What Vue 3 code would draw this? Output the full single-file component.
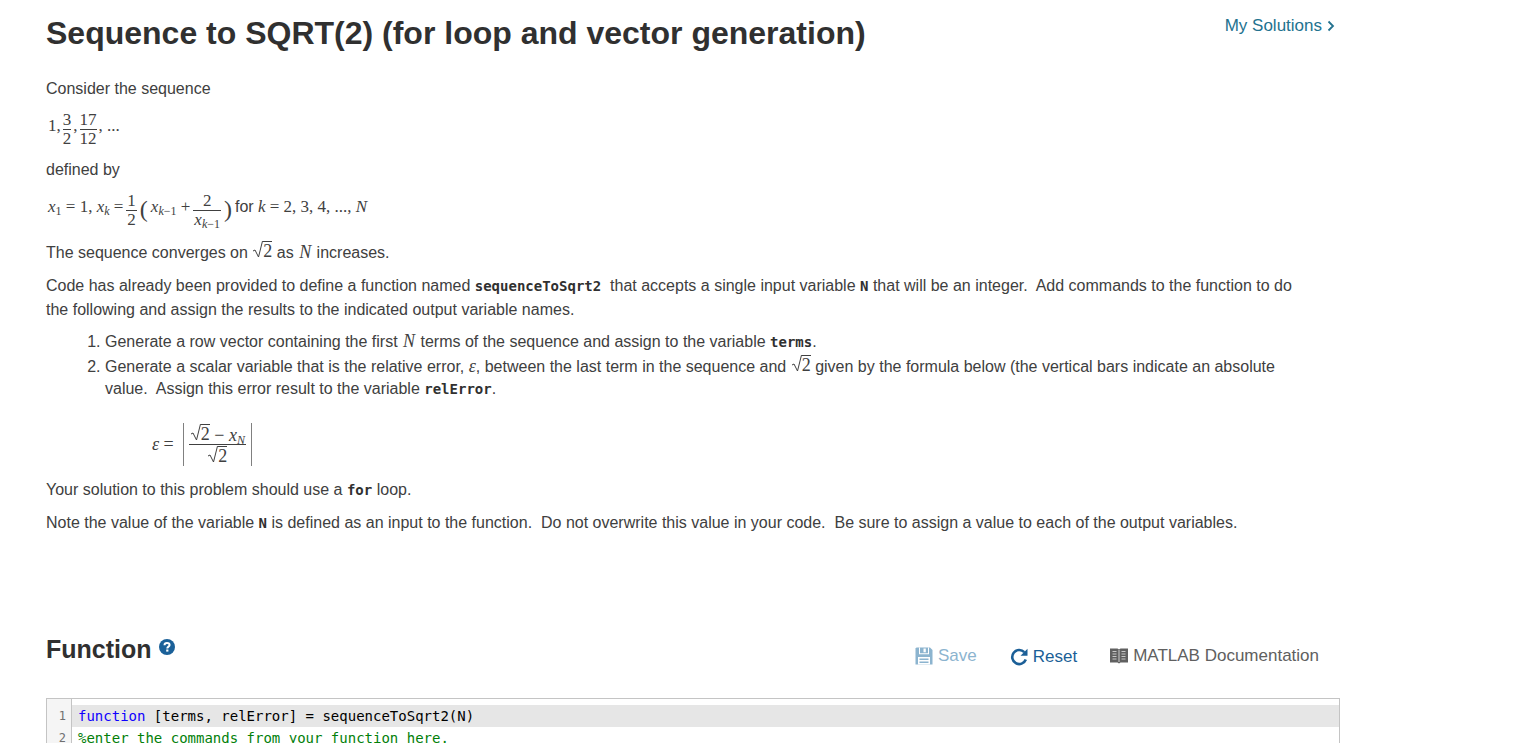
<template>
  <main class="page">
    <header class="page-header">
      <h1>{{ title }}</h1>
      <a class="solutions-link" href="#solutions">
        My Solutions
        <svg width="8" height="12" viewBox="0 0 8 12" aria-hidden="true">
          <path d="M1.500 1.500L6 6l-4.500 4.500" fill="none" stroke="currentColor" stroke-width="1.800" />
        </svg>
      </a>
    </header>

    <section class="description">
      <p>Consider the sequence</p>

      <div class="math-row sequence-row">
        <span class="term">1,</span>
        <span class="frac"><span>3</span><span>2</span></span>
        <span class="term">,</span>
        <span class="frac"><span>17</span><span>12</span></span>
        <span class="term">, ...</span>
      </div>

      <p>defined by</p>

      <div class="math-row recurrence-row">
        <span class="term"><i>x</i><sub>1</sub> = 1, <i>x</i><sub><i>k</i></sub> =</span>
        <span class="frac"><span>1</span><span>2</span></span>
        <span class="paren">(</span>
        <span class="term"><i>x</i><sub><i>k</i>−1</sub> +</span>
        <span class="frac"><span>2</span><span><i>x</i><sub><i>k</i>−1</sub></span></span>
        <span class="paren">)</span>
        <span class="term"><span class="word">for</span> <i>k</i> = 2, 3, 4, ..., <i>N</i></span>
      </div>

      <p>
        The sequence converges on
        <span class="math root"><svg class="radical" viewBox="0 0 11 18"><path d="M1 11l2-1 3.500 7L10.500 1" /></svg><span class="radicand">2</span></span>
        as <i class="math var">N</i> increases.
      </p>

      <p>
        Code has already been provided to define a function named
        <code>sequenceToSqrt2</code>&nbsp; that accepts a single input variable <code>N</code>
        that will be an integer.&nbsp; Add commands to the function to do the following and assign
        the results to the indicated output variable names.
      </p>

      <ol>
        <li>
          Generate a row vector containing the first <i class="math var">N</i> terms of the sequence
          and assign to the variable <code>terms</code>.
        </li>
        <li>
          Generate a scalar variable that is the relative error, <i class="math">ε</i>, between the
          last term in the sequence and
          <span class="math root"><svg class="radical" viewBox="0 0 11 18"><path d="M1 11l2-1 3.500 7L10.500 1" /></svg><span class="radicand">2</span></span>
          given by the formula below (the vertical bars indicate an absolute value.&nbsp; Assign this
          error result to the variable <code>relError</code>.
        </li>
      </ol>

      <div class="math-row error-row">
        <span><i>ε</i> =</span>
        <span class="abs">
          <span class="frac">
            <span><span class="root"><svg class="radical" viewBox="0 0 11 18"><path d="M1 11l2-1 3.500 7L10.500 1" /></svg><span class="radicand">2</span></span> − <i>x</i><sub><i>N</i></sub></span>
            <span><span class="root"><svg class="radical" viewBox="0 0 11 18"><path d="M1 11l2-1 3.500 7L10.500 1" /></svg><span class="radicand">2</span></span></span>
          </span>
        </span>
      </div>

      <p>Your solution to this problem should use a <code>for</code> loop.</p>
      <p>
        Note the value of the variable <code>N</code> is defined as an input to the function.&nbsp; Do
        not overwrite this value in your code.&nbsp; Be sure to assign a value to each of the output
        variables.
      </p>
    </section>

    <section class="function">
      <div class="function-header">
        <h2>Function</h2>
        <button class="help" type="button" aria-label="Help">
          <svg width="16" height="16" viewBox="0 0 16 16" aria-hidden="true">
            <circle cx="8" cy="8" r="8" fill="#1b6199" />
            <path d="M5.500 6.200C5.500 4.600 6.600 3.900 8 3.900s2.600.8 2.600 2.100c0 1.600-2.300 1.700-2.300 3.400" fill="none" stroke="#fff" stroke-width="2" />
            <rect x="7.200" y="10.500" width="2.200" height="2.100" fill="#fff" />
          </svg>
        </button>

        <div class="toolbar">
          <button class="save" type="button" disabled>
            <svg width="18" height="18" viewBox="0 0 18 18" aria-hidden="true">
              <path fill="currentColor" d="M1.500.5H15L17.500 3v14.500H.5v-16z" />
              <path fill="#fff" d="M4 .5h1v6.300H4zM13 .5h1v6.300h-1zM4 6.300h10v1H4zM8.500 1.500h2.300v3.800H8.500zM3 10h12v7.500H3z" />
              <path fill="currentColor" d="M4.500 11.500h9v1.400h-9zm0 3h9v1.400h-9z" />
            </svg>
            Save
          </button>
          <button class="reset" type="button" @click="reset">
            <svg width="18" height="18" viewBox="0 0 18 18" aria-hidden="true">
              <path d="M14.300 4.200A7 7 0 1 0 15.800 11.500" fill="none" stroke="currentColor" stroke-width="2.600" />
              <path d="M17.500.8v7h-7z" fill="currentColor" />
            </svg>
            Reset
          </button>
          <a class="docs" href="#documentation">
            <svg width="18" height="16" viewBox="0 0 18 16" aria-hidden="true">
              <path fill="currentColor" d="M0 .5h7.500L9 1.500l1.500-1H18v14h-7.500l-1.500 1-1.500-1H0z" />
              <path d="M9 2v12" stroke="#fff" stroke-width="0.700" />
              <path d="M2.500 3.500h4m-4 2.500h4m-4 2.500h4m-4 2.500h4m5-7.500h4m-4 2.500h4m-4 2.500h4m-4 2.500h4" stroke="#fff" stroke-width="1" opacity=".65" />
            </svg>
            MATLAB Documentation
          </a>
        </div>
      </div>

      <div class="editor">
        <div v-for="(line, index) in lines" :key="index" class="line" :class="{ active: index === activeLine }" @click="activeLine = index">
          <span class="gutter">{{ index + 1 }}</span>
          <pre class="source"><span v-for="(token, n) in line" :key="n" :class="token.type">{{ token.text }}</span></pre>
        </div>
      </div>
    </section>
  </main>
</template>

<script setup>
import { ref } from 'vue';

const title = 'Sequence to SQRT(2) (for loop and vector generation)';

const activeLine = ref(0);

const lines = ref([
  [
    { type: 'keyword', text: 'function' },
    { type: 'plain', text: ' [terms, relError] = sequenceToSqrt2(N)' }
  ],
  [{ type: 'comment', text: '%enter the commands from your function here.' }]
]);

const reset = () => {
  activeLine.value = 0;
};
</script>

<style>
body {
  margin: 0;
  background: #fff;
}
</style>

<style scoped>
.page {
  box-sizing: border-box;
  height: 100vh;
  overflow: hidden;
  padding: 0 175px 0 46px;
  font-family: "Liberation Sans", Arial, sans-serif;
  font-size: 16px;
  line-height: 24px;
  color: #404040;
}

.page-header {
  display: flex;
  justify-content: space-between;
  align-items: flex-start;
  padding: 14px 5px 25px 0;
}

h1 {
  margin: 0;
  font-size: 32px;
  line-height: 38px;
  color: #303030;
}

.solutions-link {
  display: flex;
  align-items: center;
  gap: 5px;
  font-size: 17px;
  color: #23728f;
  text-decoration: none;
}

.description {
  padding-right: 40px;
}

p {
  margin: 0 0 9px;
}

code {
  font-family: "DejaVu Sans Mono", monospace;
  font-size: 14px;
  font-weight: bold;
  line-height: 20px;
  color: #303030;
}

ol {
  margin: 0 0 22px;
  padding-left: 59px;
  line-height: 22px;
}

li {
  margin-bottom: 1px;
}

.math,
.math-row {
  font-family: "Liberation Serif", "Times New Roman", serif;
  font-size: 18px;
  line-height: 18px;
}

.var {
  padding: 0 1px;
}

.math-row {
  display: flex;
  align-items: center;
  white-space: nowrap;
}

.sequence-row,
.recurrence-row {
  height: 38px;
  padding-left: 2px;
  font-size: 17px;
}

.sequence-row {
  margin-bottom: 10px;
  gap: 2px;
}

.recurrence-row {
  margin-bottom: 11px;
  gap: 3px;
}

.error-row {
  height: 44px;
  margin-bottom: 12px;
  padding-left: 106px;
  gap: 9px;
}

.term {
  padding-bottom: 6px;
}

sub {
  font-size: 12px;
  line-height: 0;
  vertical-align: -3px;
}

.frac {
  display: inline-flex;
  flex-direction: column;
  text-align: center;
}

.frac > span {
  padding: 0 1px;
}

.frac > span + span {
  border-top: 1px solid #404040;
}

.sequence-row .frac > span {
  padding: 0;
}

.paren {
  padding-bottom: 3px;
  font-size: 24px;
}

.word {
  font-family: "Liberation Sans", Arial, sans-serif;
  font-size: 16px;
}

.root {
  display: inline-flex;
}

.radical {
  width: 11px;
  height: 18px;
}

.radical path {
  fill: none;
  stroke: #404040;
}

.radicand {
  height: 16px;
  margin-top: 1px;
  border-top: 1px solid #404040;
}

.abs {
  padding: 0 5px;
  border: solid #808080;
  border-width: 0 1px;
}

.function {
  padding-top: 89px;
}

.function-header {
  display: flex;
  align-items: flex-start;
  height: 65px;
}

h2 {
  margin: 0;
  font-size: 25px;
  line-height: 32px;
  color: #303030;
}

button {
  padding: 0;
  border: 0;
  background: none;
  font: inherit;
}

.help {
  display: flex;
  margin: 6px 0 0 7px;
}

.toolbar {
  display: flex;
  align-items: flex-start;
  gap: 33px;
  margin-left: auto;
  padding: 11px 21px 0 0;
  font-size: 17px;
}

.toolbar button,
.toolbar a {
  display: flex;
  align-items: center;
  gap: 5px;
  text-decoration: none;
}

.save {
  color: #8cb4cf;
}

.toolbar .reset {
  padding-top: 1px;
  color: #1b5f97;
}

.docs {
  color: #606060;
}

.editor {
  padding-top: 6px;
  border: 1px solid #c4c4c4;
  background: linear-gradient(to right, #f5f5f5 24px, #c4c4c4 24px, #c4c4c4 25px, #fff 25px);
  font-family: "DejaVu Sans Mono", monospace;
  font-size: 14px;
  line-height: 22px;
}

.line {
  display: flex;
}

.gutter {
  box-sizing: border-box;
  width: 25px;
  padding-right: 6px;
  font-size: 12px;
  text-align: right;
  color: #707070;
}

.source {
  flex: 1;
  margin: 0;
  padding-left: 6px;
  font: inherit;
  color: #000;
}

.active .source {
  background: #e6e6e6;
}

.keyword {
  color: #0e00ff;
}

.comment {
  color: #028009;
}
</style>
